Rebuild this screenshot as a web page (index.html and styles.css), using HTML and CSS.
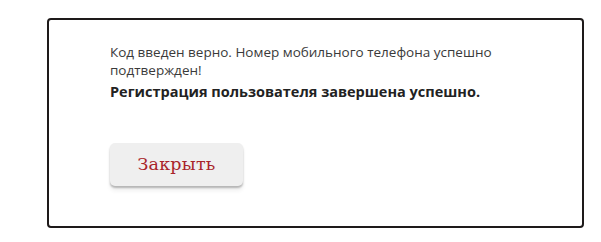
FILE: index.html
```html
<!DOCTYPE html>
<html lang="ru">
<head>
<meta charset="utf-8">
<link rel="stylesheet" href="styles.css">
</head>
<body>
<div class="dialog">
  <div class="content">
    <p class="msg">Код введен верно. Номер мобильного телефона успешно подтвержден!</p>
    <p class="done">Регистрация пользователя завершена успешно.</p>
    <button class="close">Закрыть</button>
  </div>
</div>
</body>
</html>
```
FILE: styles.css
```css
html, body {
  margin: 0;
  background: #fff;
}
body {
  padding: 18px 0 0 47px;
  font-family: "Open Sans", "DejaVu Sans", sans-serif;
}
.dialog {
  width: 537px;
  height: 210px;
  border: 2px solid #1e1a1a;
  border-radius: 4px;
  box-sizing: border-box;
  background: #fff;
}
.content {
  padding: 23px 0 0 61px;
  width: 440px;
}
.msg {
  margin: 0;
  font-size: 13.5px;
  line-height: 18px;
  color: #3a3a3a;
}
.done {
  margin: 4px 0 0;
  font-size: 14.5px;
  line-height: 18px;
  font-weight: bold;
  color: #222;
}
.close {
  margin-top: 42px;
  width: 133px;
  height: 43px;
  border: 0;
  border-radius: 5px;
  background: #efefef;
  box-shadow: 0 2px 2px rgba(0,0,0,0.25), 0 5px 4px rgba(0,0,0,0.06);
  font-family: "DejaVu Serif", serif;
  font-size: 17.5px;
  letter-spacing: 0.2px;
  color: #a8242a;
  padding: 0 0 2px;
}
```
